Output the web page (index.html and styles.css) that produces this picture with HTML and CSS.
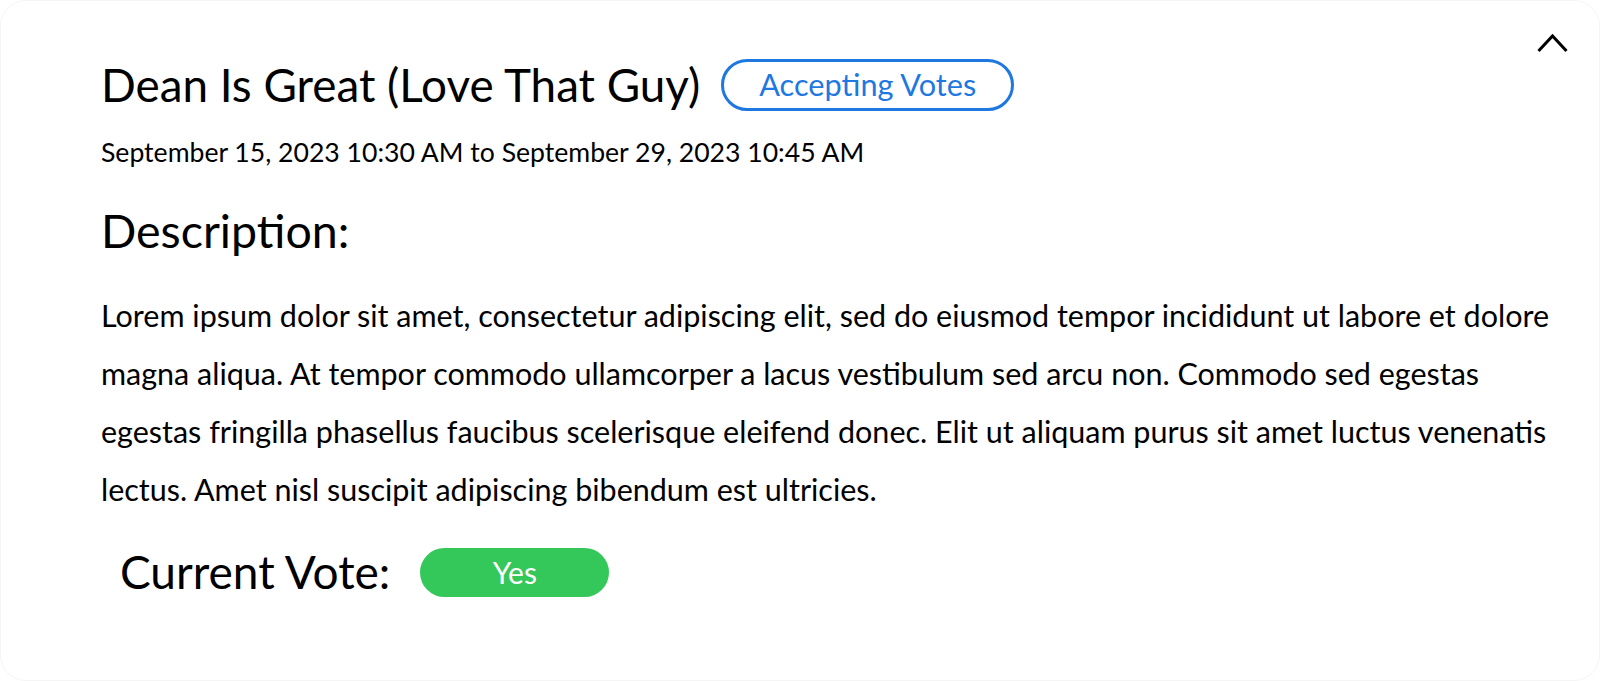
FILE: index.html
```html
<!DOCTYPE html>
<html>
<head>
<meta charset="utf-8">
<link rel="stylesheet" href="styles.css">
</head>
<body>
<div class="card">
  <button class="collapse" aria-label="Collapse">
    <svg width="34" height="24" viewBox="0 0 34 24"><polyline points="3.5,21 17.5,6 31.5,21" fill="none" stroke="#000" stroke-width="3"/></svg>
  </button>
  <div class="header">
    <h1 class="title">Dean Is Great (Love That Guy)</h1>
    <span class="badge">Accepting Votes</span>
  </div>
  <div class="dates">September 15, 2023 10:30 AM to September 29, 2023 10:45 AM</div>
  <h2 class="section">Description:</h2>
  <p class="body">Lorem ipsum dolor sit amet, consectetur adipiscing elit, sed do eiusmod tempor incididunt ut labore et dolore magna aliqua. At tempor commodo ullamcorper a lacus vestibulum sed arcu non. Commodo sed egestas egestas fringilla phasellus faucibus scelerisque eleifend donec. Elit ut aliquam purus sit amet luctus venenatis lectus. Amet nisl suscipit adipiscing bibendum est ultricies.</p>
  <div class="vote">
    <span class="vote-label">Current Vote:</span>
    <span class="vote-pill">Yes</span>
  </div>
</div>
</body>
</html>
```
FILE: styles.css
```css
html, body {
  margin: 0;
  padding: 0;
  background: #ffffff;
}
body {
  font-family: Lato, "Noto Sans", sans-serif;
  color: #000;
}
.card {
  position: relative;
  box-sizing: border-box;
  width: 1600px;
  height: 681px;
  border: 1px solid #f5f5f5;
  border-radius: 26px;
  padding: 57px 36px 0 100px;
}
.collapse {
  position: absolute;
  top: 29px;
  right: 30px;
  padding: 0;
  border: 0;
  background: none;
  line-height: 0;
}
.header {
  display: flex;
  align-items: center;
  gap: 21px;
}
.title {
  margin: 0;
  font-size: 45.8px;
  font-weight: 400;
  line-height: 54px;
}
.badge {
  box-sizing: border-box;
  height: 52px;
  padding: 0 35px;
  border: 3px solid #1f78e0;
  border-radius: 26px;
  color: #1f78e0;
  font-size: 30.7px;
  line-height: 46px;
}
.dates {
  margin-top: 24px;
  font-size: 26.6px;
  line-height: 32px;
}
.section {
  margin: 35px 0 0;
  font-size: 46.5px;
  font-weight: 400;
  line-height: 54px;
}
.body {
  margin: 29px 0 0;
  font-size: 30.5px;
  line-height: 58px;
}
.vote {
  display: flex;
  align-items: center;
  gap: 30px;
  margin-top: 27px;
  padding-left: 19px;
}
.vote-label {
  font-size: 46px;
  line-height: 54px;
}
.vote-pill {
  box-sizing: border-box;
  width: 189px;
  height: 49px;
  border-radius: 25px;
  background: #34c759;
  color: #fff;
  font-size: 30px;
  line-height: 49px;
  text-align: center;
}
```
